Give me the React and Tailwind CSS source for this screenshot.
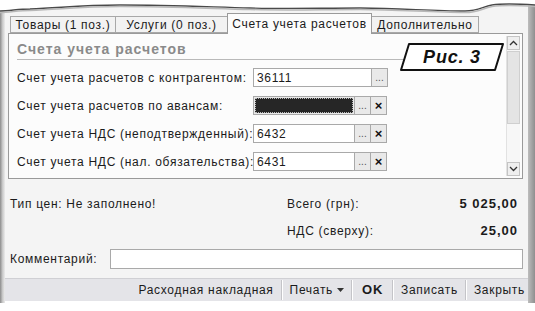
import React from 'react';

const rows = [
  { label: 'Счет учета расчетов с контрагентом:', value: '36111', clear: false },
  { label: 'Счет учета расчетов по авансам:', value: '', selected: true, clear: true },
  { label: 'Счет учета НДС (неподтвержденный):', value: '6432', clear: true },
  { label: 'Счет учета НДС (нал. обязательства):', value: '6431', clear: true },
];

const tabs = [
  { title: 'Товары (1 поз.)', width: 'w-[106px]' },
  { title: 'Услуги (0 поз.)', width: 'w-[113px]' },
  { title: 'Счета учета расчетов', width: 'w-[145px]', active: true },
  { title: 'Дополнительно', width: 'w-[108px]' },
];

const TornEdge = () => (
  <svg className="absolute left-0 top-0" width="535" height="16" viewBox="0 0 535 16">
    <path
      d="M0 0 H535 V5 C520 4 505 3 492 5 C482 7 478 11 465 11 C430 11 400 8 360 8 C320 8 290 9 250 8 C210 7 170 5 120 5 C80 5 60 8 30 9 C18 9 10 11 0 11 Z"
      fill="#ffffff"
    />
    <path
      d="M535 5 C520 4 505 3 492 5 C482 7 478 11 465 11 C430 11 400 8 360 8 C320 8 290 9 250 8 C210 7 170 5 120 5 C80 5 60 8 30 9 C18 9 10 11 0 11"
      fill="none"
      stroke="#4a4a4a"
      strokeWidth="1.4"
    />
    <path
      d="M535 6.5 C520 5.5 505 4.5 492 6.5 C482 8.5 478 12.5 465 12.5 C430 12.5 400 9.5 360 9.5 C320 9.5 290 10.5 250 9.5 C210 8.5 170 6.5 120 6.5 C80 6.5 60 9.5 30 10.5 C18 10.5 10 12.5 0 12.5"
      fill="none"
      stroke="#b8b8b8"
      strokeWidth="1.5"
    />
  </svg>
);

const FigureLabel = () => (
  <div className="absolute left-[390px] top-[8px] w-[106px] h-[30px] flex items-center justify-center">
    <svg className="absolute inset-0" width="106" height="30" viewBox="0 0 106 30">
      <polygon points="10,2 104,2 96,28 2,28" fill="#ffffff" stroke="#111111" strokeWidth="2" strokeLinejoin="round" />
    </svg>
    <span className="relative text-[18px] font-bold italic text-[#111] tracking-[0.8px]">Рис. 3</span>
  </div>
);

const Scrollbar = () => (
  <div className="w-[14px] flex flex-col bg-[#f7f7f7] border-l border-[#e2e2e2]">
    <div className="h-[14px] flex items-center justify-center bg-[#efefef] border border-[#c4c4c4]">
      <svg width="9" height="6" viewBox="0 0 9 6">
        <path d="M1 5 L4.5 1.5 L8 5" fill="none" stroke="#333" strokeWidth="1.3" />
      </svg>
    </div>
    <div className="h-[73px] mt-[1px] bg-[#e4e4e4] border border-[#cfcfcf]" />
    <div className="flex-1" />
    <div className="h-[14px] flex items-center justify-center bg-[#efefef] border border-[#c4c4c4]">
      <svg width="9" height="6" viewBox="0 0 9 6">
        <path d="M1 1 L4.5 4.5 L8 1" fill="none" stroke="#333" strokeWidth="1.3" />
      </svg>
    </div>
  </div>
);

const SmallButton = ({ children, bold }) => (
  <div
    className={`w-[17px] h-[19px] -ml-px flex items-center justify-center tracking-normal bg-[#e9e9e9] border border-[#a9a9a9] ${
      bold ? 'text-[13px] font-bold text-[#111]' : 'text-[10px] text-[#555]'
    }`}
  >
    {children}
  </div>
);

const Separator = () => <div className="w-[2px] h-[20px] border-l border-[#c4c4c8] border-r border-r-white" />;

export default function App() {
  return (
    <div className="relative w-[535px] h-[311px] overflow-hidden bg-white font-['Liberation_Sans',Arial,sans-serif] text-[12px] tracking-[0.7px] text-[#1b1b1b]">
      <div className="flex h-[303px]">
        <div className="w-[5px] bg-gradient-to-r from-[#8c8c8c] via-[#c8c8c8] to-[#ececec]" />
        <div className="flex-1 flex flex-col bg-[#f4f4f4]">
          <div className="pl-[3px] pr-[5px] pt-[13px]">
            {/* Tabs */}
            <div className="flex items-end h-[20px] pl-[2px]">
              {tabs.map((tab) =>
                tab.active ? (
                  <div
                    key={tab.title}
                    className={`${tab.width} relative z-10 h-[21px] -mb-px -ml-px flex items-center justify-center whitespace-nowrap bg-[#fcfcfc] border border-b-0 border-[#9a9a9a]`}
                  >
                    {tab.title}
                  </div>
                ) : (
                  <div
                    key={tab.title}
                    className={`${tab.width} h-[17px] flex items-center justify-center whitespace-nowrap bg-[#f2f2f2] border border-[#a8a8a8] -ml-px first:ml-0`}
                  >
                    {tab.title}
                  </div>
                )
              )}
            </div>

            {/* Panel */}
            <div className="relative h-[146px] flex bg-[#fcfcfc] border border-[#9a9a9a] p-[2px]">
              <div className="flex-1 pl-[6px] pr-[8px] pt-[6px]">
                <div className="pb-[2px] border-b border-[#b9b9b9] text-[14px] font-bold text-[#8a8a8a] tracking-[1px] leading-[15px]">
                  Счета учета расчетов
                </div>
                <div className="mt-[8px] flex flex-col gap-[9px]">
                  {rows.map((row) => (
                    <div key={row.label} className="flex items-center h-[19px]">
                      <div className="w-[236px] whitespace-nowrap">{row.label}</div>
                      {row.selected ? (
                        <div className="w-[102px] h-[19px] p-[1px] bg-[#e9e9e9] border border-[#a9a9a9]">
                          <div className="w-full h-full bg-[#262626] border border-dotted border-[#bdbdbd]" />
                        </div>
                      ) : (
                        <div
                          className={`${row.clear ? 'w-[102px]' : 'w-[119px]'} h-[19px] px-[3px] flex items-center bg-white border border-[#a9a9a9]`}
                        >
                          {row.value}
                        </div>
                      )}
                      <SmallButton>...</SmallButton>
                      {row.clear && <SmallButton bold>×</SmallButton>}
                    </div>
                  ))}
                </div>
              </div>
              <Scrollbar />
              <FigureLabel />
            </div>

            {/* Totals */}
            <div className="mt-[16px] pl-[2px] flex h-[18px] items-center">
              <div className="w-[277px]">Тип цен: Не заполнено!</div>
              <div className="flex-1">Всего (грн):</div>
              <div className="pr-[5px] font-bold text-[13px] tracking-[1px]">5 025,00</div>
            </div>
            <div className="mt-[9px] pl-[2px] flex h-[18px] items-center">
              <div className="w-[277px]" />
              <div className="flex-1">НДС (сверху):</div>
              <div className="pr-[5px] font-bold text-[13px] tracking-[1px]">25,00</div>
            </div>

            {/* Comment */}
            <div className="mt-[9px] pl-[2px] flex items-center h-[20px]">
              <div className="w-[100px]">Комментарий:</div>
              <div className="flex-1 h-[20px] bg-white border border-[#a9a9a9]" />
            </div>
          </div>

          {/* Toolbar */}
          <div className="mt-[9px] h-[24px] flex items-center justify-end gap-[5px] pr-[1px] bg-[#e4e4e8] border-t border-[#d0d0d4]">
            <span className="px-[2px]">Расходная накладная</span>
            <Separator />
            <span className="px-[2px] flex items-center gap-[4px]">
              Печать
              <svg width="7" height="4" viewBox="0 0 7 4">
                <path d="M0 0 H7 L3.5 4 Z" fill="#333" />
              </svg>
            </span>
            <Separator />
            <span className="px-[4px] font-bold text-[13px]">OK</span>
            <Separator />
            <span className="px-[2px]">Записать</span>
            <Separator />
            <span className="px-[2px]">Закрыть</span>
          </div>
          <div className="h-[2px] bg-white" />
          <div className="flex-1 bg-[#e2e2e2]" />
        </div>
        <div className="w-[7px] bg-gradient-to-r from-[#bdbdbd] to-[#8f8f8f]" />
      </div>
      <TornEdge />
    </div>
  );
}
